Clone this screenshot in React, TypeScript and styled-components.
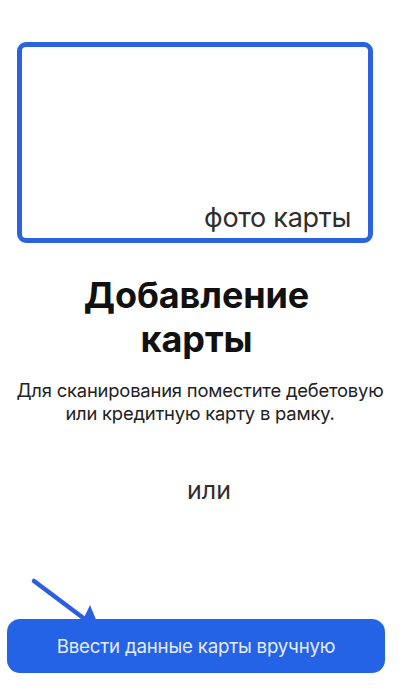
import React from "react";
import styled, { createGlobalStyle } from "styled-components";

const Global = createGlobalStyle`
  html, body {
    margin: 0;
    padding: 0;
    background: #ffffff;
  }
  body {
    font-family: Inter, "Noto Sans", Roboto, sans-serif;
  }
`;

const Screen = styled.div`
  width: 400px;
  height: 696px;
  display: flex;
  flex-direction: column;
  align-items: center;
  overflow: hidden;
  background: #fff;
`;

const Frame = styled.div`
  box-sizing: border-box;
  margin-top: 42px;
  width: 356px;
  height: 201px;
  margin-left: -10px;
  border: 5px solid #2b63df;
  border-radius: 9px;
  display: flex;
  align-items: flex-end;
  justify-content: flex-end;
  padding: 0 17px 4px 0;
`;

const FrameLabel = styled.span`
  font-size: 27px;
  color: #2e2e2e;
  letter-spacing: -0.3px;
`;

const Title = styled.h1`
  margin: 30px 0 0;
  padding-right: 7px;
  font-size: 36px;
  line-height: 44px;
  font-weight: 700;
  color: #111;
  text-align: center;
  letter-spacing: -0.1px;
`;

const Subtitle = styled.p`
  margin: 18px 0 0;
  font-size: 18.4px;
  line-height: 23px;
  color: #222;
  text-align: center;
  letter-spacing: -0.2px;
`;

const Or = styled.div`
  margin-top: 50px;
  padding-left: 18px;
  font-size: 25px;
  color: #2e2e2e;
`;

const Footer = styled.div`
  margin-top: auto;
  margin-bottom: 23px;
  position: relative;
  width: 378px;
  margin-left: -8px;
`;

const Pointer = styled.svg`
  position: absolute;
  left: 21px;
  top: -47px;
  z-index: 0;
`;

const Button = styled.button`
  position: relative;
  z-index: 1;
  width: 100%;
  height: 54px;
  border: none;
  border-radius: 13px;
  background: #2563e6;
  color: #e4ecff;
  font-family: Inter, "Noto Sans", Roboto, sans-serif;
  font-size: 18.7px;
  letter-spacing: -0.2px;
  cursor: pointer;
`;

export default function App() {
  return (
    <Screen>
      <Global />
      <Frame>
        <FrameLabel>фото карты</FrameLabel>
      </Frame>
      <Title>
        Добавление
        <br />
        карты
      </Title>
      <Subtitle>
        Для сканирования поместите дебетовую
        <br />
        или кредитную карту в рамку.
      </Subtitle>
      <Or>или</Or>
      <Footer>
        <Pointer width="80" height="70" viewBox="0 0 80 70">
          <line
            x1="6"
            y1="9"
            x2="58"
            y2="48"
            stroke="#2a5fe0"
            strokeWidth="4.5"
            strokeLinecap="round"
          />
          <polygon points="62,33 52,54 74,62" fill="#2a5fe0" />
        </Pointer>
        <Button>Ввести данные карты вручную</Button>
      </Footer>
    </Screen>
  );
}
